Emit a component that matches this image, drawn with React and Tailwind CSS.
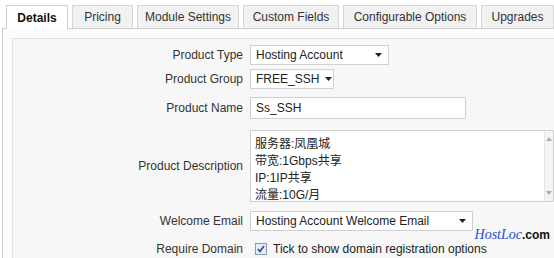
import React from 'react';

const tabs = [
  ['Details', 'w-[62px]'],
  ['Pricing', 'w-[61px]'],
  ['Module Settings', 'w-[102px]'],
  ['Custom Fields', 'w-[96px]'],
  ['Configurable Options', 'w-[134px]'],
  ['Upgrades', 'w-[73px]'],
];

function Caret() {
  return (
    <svg width="7" height="4" viewBox="0 0 7 4" className="shrink-0">
      <path d="M0 0h7L3.5 4z" fill="#222" />
    </svg>
  );
}

function Select({ value, width }) {
  return (
    <div className={`flex h-[20px] shrink-0 items-center justify-between gap-[6px] border border-[#d0d0d0] bg-white pl-[5px] pr-[6px] ${width}`}>
      <span className="whitespace-nowrap">{value}</span>
      <Caret />
    </div>
  );
}

function Row({ label, height, children }) {
  return (
    <div className={`flex items-center ${height}`}>
      <div className="w-[233px] shrink-0 pr-[3px] text-right text-[#333]">{label}</div>
      <div className="flex flex-1 items-center pl-[4px]">{children}</div>
    </div>
  );
}

export default function App() {
  return (
    <div className="h-[258px] w-[554px] overflow-hidden bg-white text-[12px] text-[#222]" style={{ fontFamily: '"Liberation Sans", Arial, sans-serif' }}>
      {/* Tabs */}
      <div className="flex items-end gap-[4px] pl-[6px] pt-[5px]">
        {tabs.map(([t, w], i) => (
          <div
            key={t}
            className={
              i === 0
                ? `relative z-10 -mb-px flex h-[24px] shrink-0 items-center justify-center whitespace-nowrap border border-b-0 border-[#cfcfcf] bg-white font-bold text-[#111] ${w}`
                : `flex h-[23px] shrink-0 items-center justify-center whitespace-nowrap border border-b-0 border-[#d6d6d6] bg-[#f1f1f1] text-[#333] ${w}`
            }
          >
            {t}
          </div>
        ))}
      </div>

      {/* Panel */}
      <div className="ml-[2px] h-full border-l border-t border-[#cfcfcf] bg-[#fbfbfb] pl-[9px] pt-[9px]">
        <div className="border-l border-t border-[#e2e2e2] bg-[#f7f7f7] pt-[3px]">
          <Row label="Product Type" height="h-[26px]">
            <Select value="Hosting Account" width="w-[139px]" />
          </Row>
          <Row label="Product Group" height="h-[22px]">
            <Select value="FREE_SSH" width="w-[84px]" />
          </Row>
          <Row label="Product Name" height="h-[36px]">
            <div className="flex h-[22px] w-[216px] items-center border border-[#d0d0d0] bg-white pl-[5px]">Ss_SSH</div>
          </Row>
          <Row label="Product Description" height="h-[80px]">
            <div className="flex h-[72px] w-[304px] border border-[#d0d0d0] bg-white">
              <div className="flex-1 pl-[4px] pt-[5px] leading-[17px]" style={{ fontFamily: '"Liberation Sans", "Noto Sans CJK SC", sans-serif' }}>
                <div>服务器:凤凰城</div>
                <div>带宽:1Gbps共享</div>
                <div>IP:1IP共享</div>
                <div>流量:10G/月</div>
              </div>
              <div className="flex w-[9px] flex-col items-center justify-between border-l border-[#e6e6e6] bg-[#f4f4f4] py-[6px]">
                <svg width="6" height="4" viewBox="0 0 6 4"><path d="M0 4h6L3 0z" fill="#aaa" /></svg>
                <svg width="6" height="4" viewBox="0 0 6 4"><path d="M0 0h6L3 4z" fill="#aaa" /></svg>
              </div>
            </div>
          </Row>
          <Row label="Welcome Email" height="h-[30px]">
            <Select value="Hosting Account Welcome Email" width="w-[223px]" />
          </Row>
          <Row label="Require Domain" height="h-[25px]">
            <div className="relative flex flex-1 items-center">
              <div className="ml-[5px] flex h-[12px] w-[12px] items-center justify-center border border-[#8c9bb0] bg-[#e6ecf4]">
                <svg width="8" height="8" viewBox="0 0 8 8"><path d="M1 4l2 2.5L7 1" fill="none" stroke="#2a4a8a" strokeWidth="1.6" /></svg>
              </div>
              <span className="ml-[6px] text-[#222]">Tick to show domain registration options</span>
              <div className="absolute right-[4px] top-[-16px] flex items-baseline">
                <span className="text-[14px] italic text-[#1f4fd1]" style={{ fontFamily: '"Liberation Serif", serif' }}>HostLoc</span>
                <span className="text-[12px] font-bold text-[#111]">.com</span>
              </div>
            </div>
          </Row>
        </div>
      </div>
    </div>
  );
}
